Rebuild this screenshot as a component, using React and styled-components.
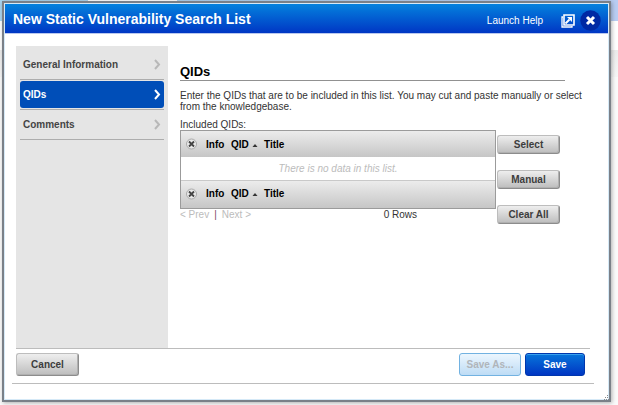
import React from "react";
import styled, { createGlobalStyle, css } from "styled-components";

const GlobalStyle = createGlobalStyle`
  * { box-sizing: border-box; }
  html, body, #root { height: 100%; }
  body {
    margin: 0;
    color: #333333;
    font: 10px/11px "Liberation Sans", Arial, sans-serif;
  }
  button { font: inherit; cursor: pointer; }
`;

const Page = styled.div`
  position: relative;
  min-height: 100%;
  display: flex;
  padding: 1px 7px 3px 2px;
  background:
    linear-gradient(90deg, transparent 88px, #ffffff 88px, #ffffff 177px, transparent 177px) 0 0 / 100% 1px no-repeat,
    linear-gradient(90deg, #a9d4ee, #b9cdf2) 0 0 / 100% 21px no-repeat,
    linear-gradient(#ffffff, #ffffff) 0 21px / 100% 29px no-repeat,
    linear-gradient(#ececec, #f6f6f6) 0 50px / 100% 27px no-repeat,
    #fafafa;
`;

const Dialog = styled.section`
  flex: 1;
  display: flex;
  flex-direction: column;
  background: #ffffff;
  border: 2px solid #7a8088;
  box-shadow: inset 0 0 0 1px #d5e9f7, 1px 1px 4px rgba(0, 0, 0, 0.3);
  padding: 1px;
`;

const Header = styled.header`
  height: 30px;
  flex: none;
  display: flex;
  align-items: center;
  padding: 0 7px 0 8px;
  color: #ffffff;
  background: linear-gradient(#0482de, #0036c4);
  border-bottom: 1px solid #b9c8ee;
`;

const DialogTitle = styled.h1`
  flex: 1;
  margin: 0;
  font-size: 14px;
  line-height: 16px;
`;

const HelpLink = styled.a`
  color: #ffffff;
  text-decoration: none;
  margin: 4px 18px 0 0;
`;

const HeaderButton = styled.button`
  display: flex;
  border: 0;
  padding: 0;
  margin: 4px 0 0 ${(p) => (p.$gap ? "5px" : "0")};
  background: none;
`;

const Main = styled.div`
  flex: 1;
  display: flex;
  gap: 12px;
  margin: 12px 18px 0 11px;
  border-bottom: 1px solid #bcbcbc;
`;

const Sidebar = styled.nav`
  flex: none;
  width: 152px;
  padding: 4px;
  background: #e5e5e5;
`;

const NavItem = styled.div`
  height: ${(p) => (p.$first ? "30px" : "29px")};
  padding-top: ${(p) => (p.$first ? "1px" : "0")};
  margin-bottom: 1px;
  border-bottom: 1px solid #adadad;
`;

const NavLink = styled.a`
  display: flex;
  align-items: center;
  justify-content: space-between;
  height: 27px;
  padding: 0 3px;
  border-radius: 3px;
  color: #444444;
  font-weight: bold;
  text-decoration: none;
  ${(p) => p.$active && css`
    color: #ffffff;
    background: #004eb8;
  `}
`;

const Content = styled.div`
  flex: 1;
  min-width: 0;
  padding-top: 18px;
`;

const SectionTitle = styled.h2`
  margin: 0 25px 9px 0;
  padding-bottom: 1px;
  border-bottom: 1px solid #919191;
  color: #000000;
  font-size: 13px;
  line-height: 15px;
`;

const Description = styled.p`
  margin: 0 0 8px;
`;

const Label = styled.div`
  line-height: 10px;
`;

const ListArea = styled.div`
  display: flex;
  margin-right: 30px;
`;

const ListColumn = styled.div`
  flex: 1;
`;

const Table = styled.table`
  width: 100%;
  border: 1px solid #9b9b9b;
  border-collapse: separate;
  border-spacing: 0;
`;

const HeadRow = styled.tr`
  height: ${(p) => (p.$foot ? "27px" : "26px")};
  background: linear-gradient(#ececec, #c6c6c6);
  th { padding-bottom: ${(p) => (p.$foot ? "2px" : "0")}; }
`;

const HeadCell = styled.th`
  width: ${(p) => p.$width || "auto"};
  padding: 0 0 0 ${(p) => (p.$icon ? "5px" : "0")};
  color: #000000;
  text-align: left;
  white-space: nowrap;
  svg { vertical-align: ${(p) => (p.$icon ? "middle" : "baseline")}; }
`;

const EmptyCell = styled.td`
  height: 24px;
  padding: 0;
  border-bottom: 1px solid #c9c9c9;
  color: #bcbcbc;
  font-style: italic;
  text-align: center;
`;

const Pager = styled.div`
  display: flex;
  gap: 5px;
  color: #bcbcbc;
`;

const PagerButton = styled.button`
  border: 0;
  padding: 0;
  background: none;
  color: #bcbcbc;
`;

const Divider = styled.span`
  color: #7e4b68;
`;

const RowCount = styled.span`
  margin: 0 79px 0 auto;
  color: #333333;
`;

const Actions = styled.div`
  flex: none;
  width: 64px;
  display: flex;
  flex-direction: column;
  gap: 16px;
  padding: 5px 0 0 1px;
`;

const Button = styled.button`
  height: ${(p) => (p.$large ? "23px" : "19px")};
  min-width: 63px;
  padding: 0 6px;
  border: 1px solid;
  border-color: #bdbdbd #8c8c8c #8c8c8c #bdbdbd;
  border-radius: 3px;
  background: linear-gradient(#eeeeee, #bdbdbd);
  box-shadow: inset -1px -1px 0 #b0b0b0;
  color: #3d3d3d;
  font-weight: bold;
  ${(p) => p.$kind === "primary" && css`
    min-width: 60px;
    border-color: #0037ad;
    background: linear-gradient(#0875da, #0036c3);
    box-shadow: inset 0 1px 0 #38a0ee;
    color: #ffffff;
  `}
  ${(p) => p.$kind === "disabled" && css`
    min-width: 62px;
    border-color: #72b2e1;
    background: linear-gradient(#ecf6fe, #bedcf5);
    box-shadow: none;
    color: #b0b5ba;
    cursor: default;
  `}
`;

const Footer = styled.footer`
  flex: none;
  display: flex;
  align-items: flex-start;
  gap: 4px;
  height: 35px;
  margin: 0 14px 15px 7px;
  padding: 4px 9px 0 4px;
  border-bottom: 1px solid #bcbcbc;
`;

const Spacer = styled.span`
  flex: 1;
`;

const GripCorner = styled.svg`
  position: absolute;
  right: 9px;
  bottom: 5px;
`;

const Chevron = ({ color }) => (
  <svg width="7" height="11" viewBox="0 0 7 11" fill="none" stroke={color} strokeWidth="2" aria-hidden="true">
    <path d="M1 1l4 4.5L1 10" />
  </svg>
);

const PopOutIcon = () => (
  <svg width="14" height="14" viewBox="0 0 14 14" fill="none" aria-hidden="true">
    <path d="M2 3H1v10h10v-1" stroke="#fff" strokeWidth="1.3" />
    <path d="M3 1h10v10H3z" stroke="#fff" strokeWidth="1.6" />
    <path d="M4.5 9.5l4-4" stroke="#fff" strokeWidth="2" />
    <path d="M6 3h5v5z" fill="#fff" />
  </svg>
);

const CloseIcon = () => (
  <svg width="21" height="21" viewBox="0 0 21 21" aria-hidden="true">
    <circle cx="10.5" cy="10.5" r="10.2" fill="#0029a4" />
    <path d="M7 7l7 7M14 7l-7 7" stroke="#fff" strokeWidth="3" />
  </svg>
);

const RemoveIcon = () => (
  <svg width="11" height="12" viewBox="0 0 11 12" aria-hidden="true">
    <circle cx="5.5" cy="6" r="5" fill="#e9e9e9" stroke="#aaa" />
    <path d="M3 3.5l5 5M8 3.5l-5 5" stroke="#444" strokeWidth="1.8" />
  </svg>
);

const SortIcon = () => (
  <svg width="6" height="5" viewBox="0 0 6 5" aria-hidden="true">
    <path d="M3 1l2.5 3h-5z" fill="#333" />
  </svg>
);

const HeadingRow = ({ foot }) => (
  <HeadRow $foot={foot}>
    <HeadCell $width="25px" $icon scope="col"><RemoveIcon /></HeadCell>
    <HeadCell $width="25px" scope="col">Info</HeadCell>
    <HeadCell $width="33px" scope="col">QID <SortIcon /></HeadCell>
    <HeadCell scope="col">Title</HeadCell>
  </HeadRow>
);

const sections = ["General Information", "QIDs", "Comments"];

export default function App() {
  return (
    <>
      <GlobalStyle />
      <Page>
        <Dialog role="dialog" aria-labelledby="dialog-title">
          <Header>
            <DialogTitle id="dialog-title">New Static Vulnerability Search List</DialogTitle>
            <HelpLink href="#help">Launch Help</HelpLink>
            <HeaderButton type="button" aria-label="Open in new window"><PopOutIcon /></HeaderButton>
            <HeaderButton type="button" aria-label="Close" $gap><CloseIcon /></HeaderButton>
          </Header>
          <Main>
            <Sidebar>
              {sections.map((name, i) => {
                const active = name === "QIDs";
                return (
                  <NavItem key={name} $first={i === 0}>
                    <NavLink href="#section" $active={active}>
                      {name}
                      <Chevron color={active ? "#ffffff" : "#b8b8b8"} />
                    </NavLink>
                  </NavItem>
                );
              })}
            </Sidebar>
            <Content>
              <SectionTitle>QIDs</SectionTitle>
              <Description>
                Enter the QIDs that are to be included in this list. You may cut and paste manually or select from the knowledgebase.
              </Description>
              <Label id="list-label">Included QIDs:</Label>
              <ListArea>
                <ListColumn>
                  <Table aria-labelledby="list-label">
                    <thead><HeadingRow /></thead>
                    <tbody><tr><EmptyCell colSpan={4}>There is no data in this list.</EmptyCell></tr></tbody>
                    <tfoot><HeadingRow foot /></tfoot>
                  </Table>
                  <Pager>
                    <PagerButton type="button">&lt; Prev</PagerButton>
                    <Divider>|</Divider>
                    <PagerButton type="button">Next &gt;</PagerButton>
                    <RowCount>0 Rows</RowCount>
                  </Pager>
                </ListColumn>
                <Actions>
                  <Button type="button">Select</Button>
                  <Button type="button">Manual</Button>
                  <Button type="button">Clear All</Button>
                </Actions>
              </ListArea>
            </Content>
          </Main>
          <Footer>
            <Button type="button" $large>Cancel</Button>
            <Spacer />
            <Button type="button" $large $kind="disabled" disabled>Save As...</Button>
            <Button type="button" $large $kind="primary">Save</Button>
          </Footer>
          <GripCorner width="5" height="5" viewBox="0 0 5 5" fill="#8a8a8a" aria-hidden="true">
            <path d="M3 0h1v1H3zM1 2h1v1H1zM3 2h1v1H3zM0 4h1v1H0zM2 4h1v1H2zM4 4h1v1H4z" />
          </GripCorner>
        </Dialog>
      </Page>
    </>
  );
}
